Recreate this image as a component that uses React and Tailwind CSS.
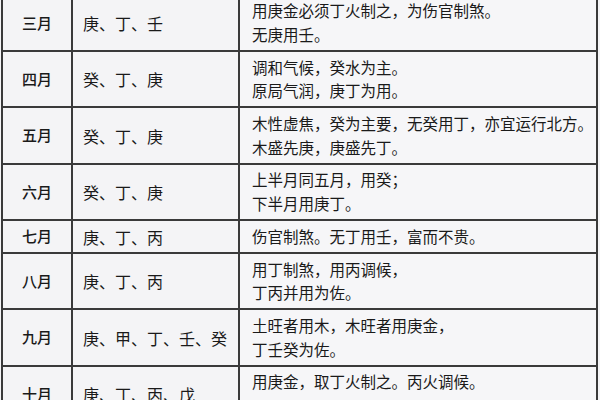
import React from 'react';

const rows = [
  { month: '三月', stems: '庚、丁、壬', lines: ['用庚金必须丁火制之，为伤官制煞。', '无庚用壬。'] },
  { month: '四月', stems: '癸、丁、庚', lines: ['调和气候，癸水为主。', '原局气润，庚丁为用。'] },
  { month: '五月', stems: '癸、丁、庚', lines: ['木性虚焦，癸为主要，无癸用丁，亦宜运行北方。', '木盛先庚，庚盛先丁。'] },
  { month: '六月', stems: '癸、丁、庚', lines: ['上半月同五月，用癸；', '下半月用庚丁。'] },
  { month: '七月', stems: '庚、丁、丙', lines: ['伤官制煞。无丁用壬，富而不贵。'] },
  { month: '八月', stems: '庚、丁、丙', lines: ['用丁制煞，用丙调候，', '丁丙并用为佐。'] },
  { month: '九月', stems: '庚、甲、丁、壬、癸', lines: ['土旺者用木，木旺者用庚金，', '丁壬癸为佐。'] },
  { month: '十月', stems: '庚、丁、丙、戊', lines: ['用庚金，取丁火制之。丙火调候。', '\u00a0'] },
];

const App = () => {
  return (
    <div
      className="w-[600px] h-[400px] overflow-hidden bg-[#f4f4f6] text-[#1a1a1a]"
      style={{ fontFamily: '"Noto Sans CJK SC", "Noto Sans", sans-serif' }}
    >
      <div className="ml-[1px] -mt-[4.4px] w-[597px] border-l-2 border-[#3a3a3a]">
        {rows.map((row) => (
          <div key={row.month} className="grid grid-cols-[70px_167px_358px] border-b-2 border-[#3a3a3a]">
            <div className="flex items-center justify-center border-r-2 border-[#3a3a3a] text-[15px] font-medium">
              {row.month}
            </div>
            <div className="flex items-center pl-[10px] border-r-2 border-[#3a3a3a] text-[16px]">
              {row.stems}
            </div>
            <div className="flex flex-col justify-center pl-[12px] py-[3.7px] border-r-2 border-[#3a3a3a] bg-[#f6f6f8] text-[15.5px] leading-[23.5px]">
              {row.lines.map((line, i) => (
                <span key={i} className="whitespace-nowrap">{line}</span>
              ))}
            </div>
          </div>
        ))}
      </div>
    </div>
  );
};

export default App;
